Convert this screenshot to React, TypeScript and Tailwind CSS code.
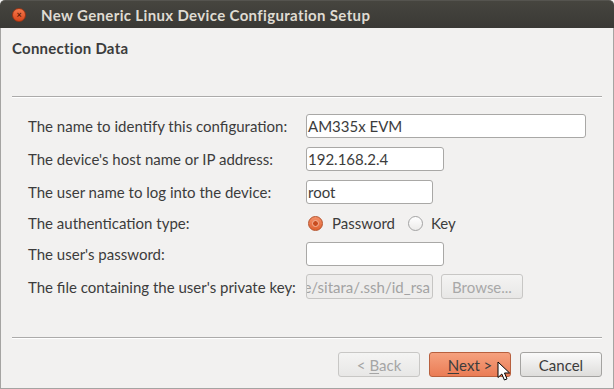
import React from 'react';

const font = { fontFamily: 'Lato, "Open Sans", "DejaVu Sans", sans-serif' };

function Field({ width, value }: { width: string; value?: string }) {
  return (
    <div className={`${width} h-[24px] rounded-[3px] border border-[#a9a8a6] bg-white text-[#3c3c3c] pl-[1px] flex items-center overflow-hidden whitespace-nowrap`}>
      {value}
    </div>
  );
}

function Radio({ checked }: { checked?: boolean }) {
  if (checked) {
    return (
      <div className="w-[15px] h-[15px] rounded-full border border-[#b5512a] bg-gradient-to-b from-[#f39068] to-[#e0622f] flex items-center justify-center">
        <div className="w-[7px] h-[7px] rounded-full bg-[#c84c1f] border border-[#f6b89d]" />
      </div>
    );
  }
  return <div className="w-[15px] h-[15px] rounded-full border border-[#a3a3a3] bg-gradient-to-b from-white to-[#ecebea]" />;
}

function Button({ children, kind }: { children: React.ReactNode; kind: 'off' | 'primary' | 'normal' }) {
  const look =
    kind === 'primary'
      ? 'border-[#b8603e] bg-gradient-to-b from-[#f5a17e] to-[#ea7c55] text-[#3c3c3c]'
      : kind === 'off'
      ? 'border-[#c8c7c5] bg-gradient-to-b from-[#f4f4f3] to-[#e8e7e6] text-[#a5a5a5]'
      : 'border-[#a4a3a1] bg-gradient-to-b from-[#fafafa] to-[#dedddb] text-[#3c3c3c]';
  return (
    <div className={`w-[82px] h-[25px] rounded-[3px] border flex items-center justify-center ${look}`}>{children}</div>
  );
}

export default function App() {
  const rows: [string, React.ReactNode][] = [
    ['The name to identify this configuration:', <Field width="w-[280px]" value="AM335x EVM" />],
    ["The device's host name or IP address:", <Field width="w-[138px]" value="192.168.2.4" />],
    ['The user name to log into the device:', <Field width="w-[127px]" value="root" />],
  ];

  return (
    <div className="relative w-[614px] h-[389px] flex flex-col bg-[#f2f1f0] text-[15px] leading-[18px] text-[#3c3c3c] overflow-hidden" style={font}>
      <div className="h-[28px] shrink-0 flex items-center bg-gradient-to-b from-[#46453f] to-[#3a3935] rounded-t-[5px] border-t border-[#55544f]">
        <div className="ml-[12px] w-[14px] h-[14px] rounded-full bg-gradient-to-b from-[#f4774a] to-[#d9461b] border border-[#9a3515] flex items-center justify-center text-[#5a1a05] text-[9px] leading-none font-bold">
          ×
        </div>
        <div className="ml-[15px] text-[#dfdbd2] font-bold text-[15px] tracking-[0.35px]">New Generic Linux Device Configuration Setup</div>
      </div>

      <div className="flex-1 flex flex-col border-x border-b border-[#a5a4a2]">
        <div className="px-[11px] pt-[11px]">
          <div className="font-bold text-[15px] tracking-[0.25px] text-[#3c3c3c]">Connection Data</div>
          <div className="mt-[39px] border-t border-[#acabaa] border-b border-b-white" />
        </div>

        <div className="pl-[27px] pt-[16px] flex flex-col gap-[9px]">
          {rows.map(([label, field]) => (
            <div key={label} className="flex items-center">
              <div className="w-[278px]">{label}</div>
              {field}
            </div>
          ))}
          <div className="flex items-center h-[20px]">
            <div className="w-[278px]">The authentication type:</div>
            <div className="flex items-center pl-[2px]">
              <Radio checked />
              <span className="ml-[9px]">Password</span>
              <span className="ml-[13px]">
                <Radio />
              </span>
              <span className="ml-[8px]">Key</span>
            </div>
          </div>
          <div className="flex items-center">
            <div className="w-[278px]">The user's password:</div>
            <Field width="w-[138px]" />
          </div>
          <div className="flex items-center -mt-[1px]">
            <div className="w-[278px]">The file containing the user's private key:</div>
            <div className="h-[25px] w-[127px] rounded-[3px] border border-[#c6c5c3] bg-[#eeedec] text-[#a3a3a3] flex items-center justify-end pr-[2px] overflow-hidden whitespace-nowrap">
              /home/sitara/.ssh/id_rsa
            </div>
            <div className="ml-[8px] w-[82px] h-[25px] rounded-[3px] border border-[#c8c7c5] bg-gradient-to-b from-[#f4f4f3] to-[#e8e7e6] text-[#a8a8a8] flex items-center justify-center">
              Browse...
            </div>
          </div>
        </div>

        <div className="flex-1" />

        <div className="px-[11px]">
          <div className="border-t border-[#acabaa] border-b border-b-white" />
        </div>

        <div className="flex justify-end gap-[9px] pr-[11px] pt-[13px] pb-[11px]">
          <Button kind="off">
            &lt; <span className="underline underline-offset-2 ml-[4px]">B</span>ack
          </Button>
          <Button kind="primary">
            <span className="underline underline-offset-2">N</span>ext &gt;
          </Button>
          <Button kind="normal">Cancel</Button>
        </div>
      </div>

      <svg className="absolute left-[497px] top-[361px]" width="14" height="21" viewBox="0 0 14 21">
        <path d="M1 1 L1 16.5 L4.8 13 L7.4 19 L10 17.9 L7.5 12 L12.6 12 Z" fill="white" stroke="black" strokeWidth="1" strokeLinejoin="round" />
      </svg>
    </div>
  );
}
